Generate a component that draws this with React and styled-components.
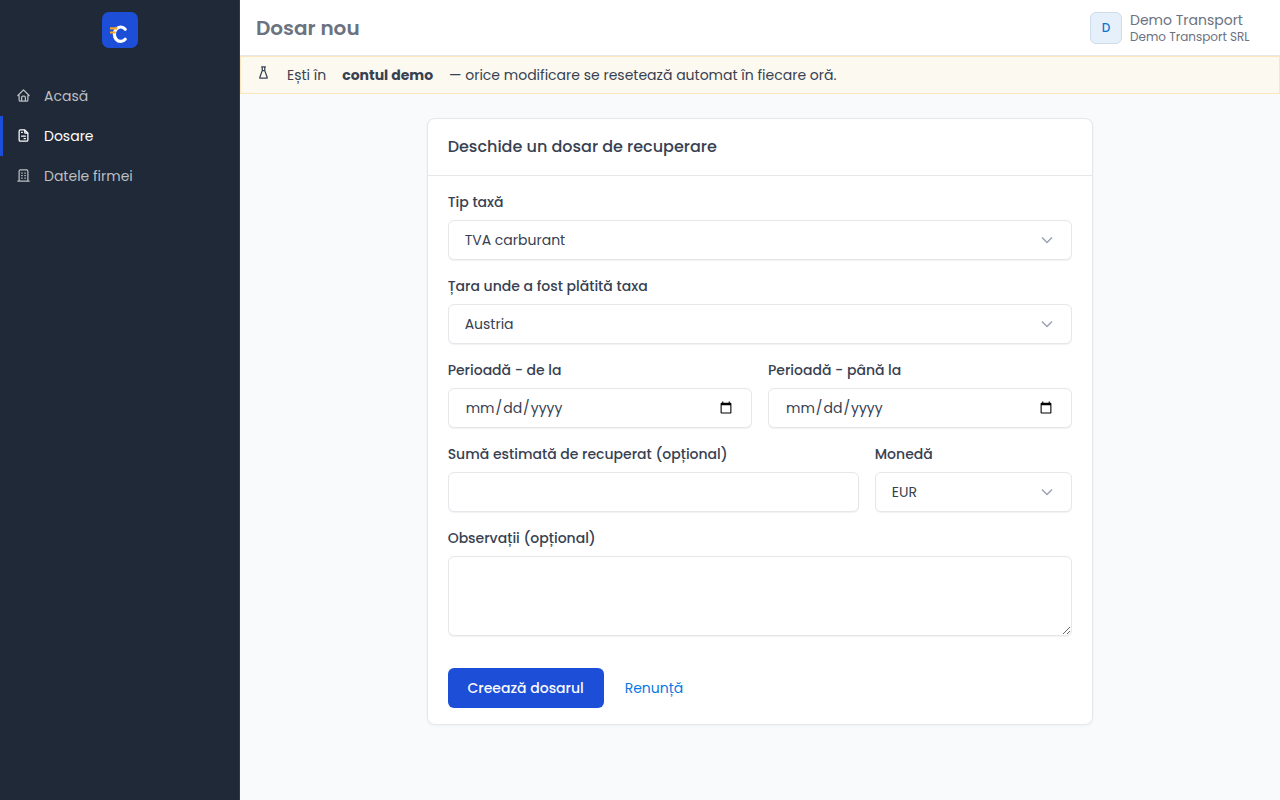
import React from "react";
import styled, { createGlobalStyle, css } from "styled-components";

const GlobalStyle = createGlobalStyle`
  *, *::before, *::after { box-sizing: border-box; }
  body {
    margin: 0;
    background: #f9fafb;
    color: #374151;
    font-family: Poppins, Inter, "Liberation Sans", sans-serif;
    font-size: 14px;
    line-height: 20px;
    font-feature-settings: "liga" 0;
  }
  h1, h2, p { margin: 0; }
`;

const Shell = styled.div`
  display: grid;
  grid-template-columns: 240px minmax(0, 1fr);
  min-height: 100vh;
`;

const Sidebar = styled.aside`
  background: #1f2937;
  border-right: 1px solid #323a47;
`;

const Brand = styled.a`
  display: flex;
  justify-content: center;
  padding: 12px 0;
  margin-bottom: 16px;
`;

const NavLink = styled.a`
  display: flex;
  align-items: center;
  gap: 13px;
  height: 40px;
  padding-left: 13px;
  border-left: 3px solid ${(p) => (p.$active ? "#1d4ed8" : "transparent")};
  color: ${(p) => (p.$active ? "#ffffff" : "#bcbfc3")};
  text-decoration: none;

  svg { margin-bottom: 1px; }
`;

const Main = styled.div`
  min-width: 0;
`;

const TopBar = styled.header`
  display: flex;
  align-items: center;
  justify-content: space-between;
  height: 56px;
  padding: 0 24px 0 16px;
  background: #ffffff;
  border-bottom: 1px solid #e5e7eb;
`;

const PageTitle = styled.h1`
  color: #6b7280;
  font-size: 20px;
  line-height: 28px;
  font-weight: 600;
`;

const Account = styled.div`
  display: flex;
  align-items: center;
  gap: 8px;
  color: #6b7280;
`;

const Avatar = styled.span`
  display: flex;
  align-items: center;
  justify-content: center;
  width: 32px;
  height: 32px;
  border: 1px solid #cddcec;
  border-radius: 6px;
  background: #e6f0fa;
  color: #1273cf;
  font-size: 12px;
  font-weight: 500;
`;

const AccountText = styled.div`
  min-width: 126px;
`;

const AccountName = styled.p`
  line-height: 18px;
`;

const AccountCompany = styled.p`
  font-size: 12px;
  line-height: 16px;
`;

const Notice = styled.div`
  display: flex;
  gap: 16px;
  padding: 8px 15px;
  border: 1px solid #fbe6bd;
  background: #fcf9f0;
`;

const Content = styled.main`
  display: grid;
  grid-template-columns: repeat(12, minmax(0, 1fr));
  column-gap: 16px;
  padding: 24px 16px;
`;

const Card = styled.section`
  grid-column: 3 / 11;
  border: 1px solid #e5e7eb;
  border-radius: 8px;
  background: #ffffff;
  box-shadow: 0 1px 3px rgba(31, 41, 55, 0.05);
`;

const CardHeader = styled.div`
  padding: 16px 20px;
  border-bottom: 1px solid #e5e7eb;
`;

const CardTitle = styled.h2`
  font-size: 16px;
  line-height: 24px;
  font-weight: 500;
`;

const Form = styled.form`
  display: grid;
  grid-template-columns: repeat(12, minmax(0, 1fr));
  gap: 16px;
  padding: 16px 20px;
`;

const Field = styled.div`
  grid-column: span ${(p) => p.$span || 12};
`;

const Label = styled.label`
  display: block;
  margin-bottom: 8px;
  font-weight: 500;
`;

const control = css`
  display: block;
  width: 100%;
  height: 40px;
  padding: 8px 16px;
  border: 1px solid #e5e7eb;
  border-radius: 6px;
  background: #ffffff;
  box-shadow: 0 1px 1px rgba(31, 41, 55, 0.06);
  color: #374151;
  font: inherit;
`;

const Input = styled.input`
  ${control}
`;

const TextArea = styled.textarea`
  ${control}
  height: 80px;
  resize: vertical;
`;

const Select = styled.select`
  ${control}
  appearance: none;
`;

const SelectWrap = styled.div`
  display: grid;
  align-items: center;

  > * { grid-area: 1 / 1; }
  > svg { justify-self: end; margin-right: 17px; pointer-events: none; }
`;

const Actions = styled.div`
  grid-column: 1 / -1;
  display: flex;
  gap: 4px;
  padding-top: 16px;
`;

const action = css`
  height: 40px;
  padding: 0 16px;
  border: 1px solid transparent;
  border-radius: 6px;
  font: inherit;
  line-height: 38px;
`;

const SubmitButton = styled.button`
  ${action}
  min-width: 156px;
  background: #1d4ed8;
  color: #f9fafb;
  font-weight: 500;
`;

const CancelLink = styled.a`
  ${action}
  color: #0779e4;
  text-decoration: none;
`;

const iconPaths = {
  home: "M5 12H3l9-9 9 9h-2M5 12v7a2 2 0 0 0 2 2h10a2 2 0 0 0 2-2v-7M9 21v-6a2 2 0 0 1 2-2h2a2 2 0 0 1 2 2v6",
  invoice:
    "M14 3v4a1 1 0 0 0 1 1h4M17 21H7a2 2 0 0 1-2-2V5a2 2 0 0 1 2-2h7l5 5v11a2 2 0 0 1-2 2zM9 7h1M9 13h6M13 17h2",
  building:
    "M3 21h18M9 8h1M9 12h1M9 16h1M14 8h1M14 12h1M14 16h1M5 21V5a2 2 0 0 1 2-2h10a2 2 0 0 1 2 2v16",
  flask: "M9 3h6M10 9h4M10 3v6L6 20a.7.7 0 0 0 .5 1h11a.7.7 0 0 0 .5-1L14 9V3",
};

function Icon({ name }) {
  return (
    <svg width="15" height="15" viewBox="0 0 24 24" fill="none" stroke="currentColor"
      strokeWidth="2" strokeLinecap="round" strokeLinejoin="round" aria-hidden="true">
      <path d={iconPaths[name]} />
    </svg>
  );
}

function Logo() {
  return (
    <svg width="36" height="36" viewBox="0 0 36 36" fill="none" aria-hidden="true">
      <rect width="36" height="36" rx="7" fill="#1d4ed8" />
      <path d="M23.2 17.2A6.3 7.2 0 1 0 23.2 27.2" stroke="#fff" strokeWidth="3.2" strokeLinecap="round" />
      <path d="M8 15.3h8l-1 2.1H8zM8 19.4h6l-.5 2.1H8z" fill="#f9a825" />
    </svg>
  );
}

function SelectField({ id, label, span, options }) {
  return (
    <Field $span={span}>
      <Label htmlFor={id}>{label}</Label>
      <SelectWrap>
        <Select id={id}>
          {options.map((o) => <option key={o}>{o}</option>)}
        </Select>
        <svg width="16" height="16" viewBox="0 0 16 16" fill="none" stroke="#9ca3af" strokeWidth="1.5" aria-hidden="true">
          <path d="M3 5.5l5 5 5-5" />
        </svg>
      </SelectWrap>
    </Field>
  );
}

function InputField({ id, label, span, type }) {
  return (
    <Field $span={span}>
      <Label htmlFor={id}>{label}</Label>
      <Input id={id} type={type} />
    </Field>
  );
}

export default function App() {
  return (
    <>
      <GlobalStyle />
      <Shell>
        <Sidebar>
          <Brand href="#" aria-label="Acasă"><Logo /></Brand>
          <nav>
            <NavLink href="#"><Icon name="home" />Acasă</NavLink>
            <NavLink href="#" $active aria-current="page"><Icon name="invoice" />Dosare</NavLink>
            <NavLink href="#"><Icon name="building" />Datele firmei</NavLink>
          </nav>
        </Sidebar>
        <Main>
          <TopBar>
            <PageTitle>Dosar nou</PageTitle>
            <Account>
              <Avatar>D</Avatar>
              <AccountText>
                <AccountName>Demo Transport</AccountName>
                <AccountCompany>Demo Transport SRL</AccountCompany>
              </AccountText>
            </Account>
          </TopBar>
          <Notice>
            <Icon name="flask" />
            <span>Ești în</span>
            <strong>contul demo</strong>
            <span>— orice modificare se resetează automat în fiecare oră.</span>
          </Notice>
          <Content>
            <Card>
              <CardHeader>
                <CardTitle>Deschide un dosar de recuperare</CardTitle>
              </CardHeader>
              <Form>
                <SelectField id="tax" label="Tip taxă" options={["TVA carburant"]} />
                <SelectField id="country" label="Țara unde a fost plătită taxa" options={["Austria"]} />
                <InputField id="from" label="Perioadă - de la" type="date" span={6} />
                <InputField id="to" label="Perioadă - până la" type="date" span={6} />
                <InputField id="amount" label="Sumă estimată de recuperat (opțional)" type="text" span={8} />
                <SelectField id="currency" label="Monedă" span={4} options={["EUR"]} />
                <Field>
                  <Label htmlFor="notes">Observații (opțional)</Label>
                  <TextArea id="notes" />
                </Field>
                <Actions>
                  <SubmitButton type="submit">Creează dosarul</SubmitButton>
                  <CancelLink href="#">Renunță</CancelLink>
                </Actions>
              </Form>
            </Card>
          </Content>
        </Main>
      </Shell>
    </>
  );
}
